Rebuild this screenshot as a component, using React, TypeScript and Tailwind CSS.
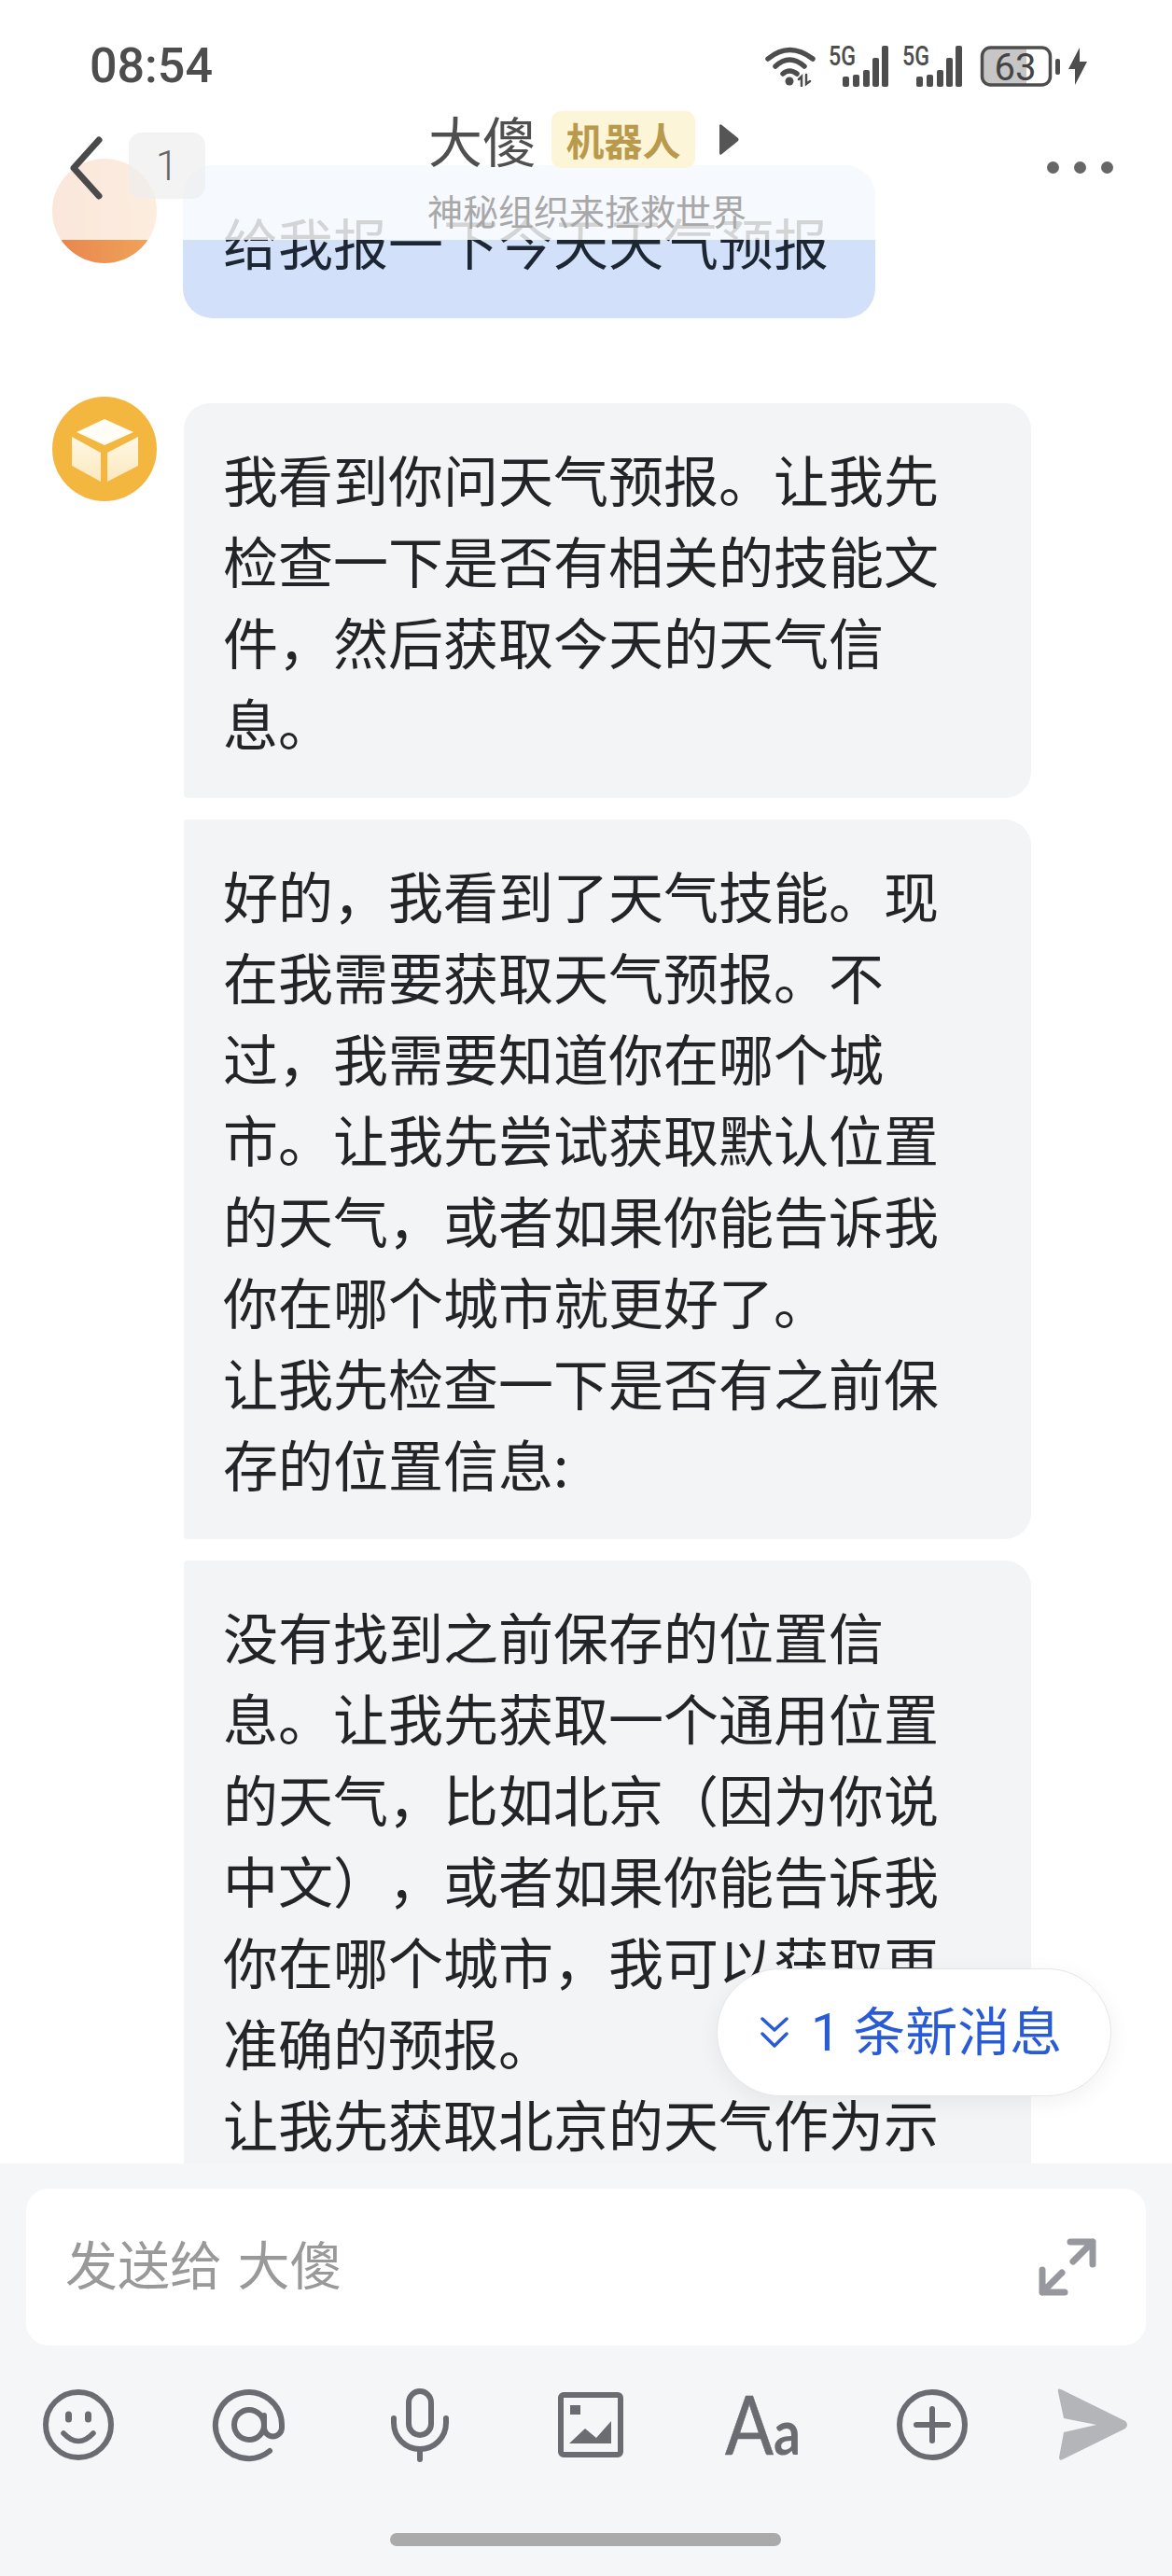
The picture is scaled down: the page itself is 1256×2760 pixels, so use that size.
const bubbles = [
  {
    corner: 'rounded-tl-[28px]',
    lines: ['我看到你问天气预报。让我先', '检查一下是否有相关的技能文', '件，然后获取今天的天气信', '息。'],
  },
  {
    corner: 'rounded-tl-[4px]',
    lines: [
      '好的，我看到了天气技能。现',
      '在我需要获取天气预报。不',
      '过，我需要知道你在哪个城',
      '市。让我先尝试获取默认位置',
      '的天气，或者如果你能告诉我',
      '你在哪个城市就更好了。',
      '让我先检查一下是否有之前保',
      '存的位置信息:',
    ],
  },
  {
    corner: 'rounded-tl-[4px]',
    lines: [
      '没有找到之前保存的位置信',
      '息。让我先获取一个通用位置',
      '的天气，比如北京（因为你说',
      '中文），或者如果你能告诉我',
      '你在哪个城市，我可以获取更',
      '准确的预报。',
      '让我先获取北京的天气作为示',
    ],
  },
];

const Wifi = () => (
  <svg width="54" height="44" viewBox="0 0 54 44" fill="none" stroke="#4d4d4d" strokeWidth="5.5" strokeLinecap="round">
    <path d="M3 14 Q26 -5 51 14" />
    <path d="M11 22 Q26 8 42 22" />
    <path d="M19 30 Q26 24 34 30" />
    <circle cx="26" cy="38" r="4.5" fill="#4d4d4d" stroke="none" />
    <path d="M39 43 V33 L36 36 M44 31 V41 L48 38" strokeWidth="2.5" />
  </svg>
);

const Signal = () => (
  <svg width="64" height="44" viewBox="0 0 64 44" fill="#4d4d4d">
    <text x="0" y="21" fontFamily="Roboto" fontSize="29" fontWeight="500" textLength="29" lengthAdjust="spacingAndGlyphs">
      5G
    </text>
    <rect x="15" y="33" width="7" height="11" rx="2" />
    <rect x="26" y="31" width="7" height="13" rx="2" />
    <rect x="37" y="26" width="7" height="18" rx="2" />
    <rect x="47" y="13" width="7" height="31" rx="2" />
    <rect x="57" y="0" width="7" height="44" rx="2" />
  </svg>
);

const Battery = () => (
  <svg width="86" height="44" viewBox="0 0 86 44">
    <path d="M10 3 H50 V41 H10 Q3 41 3 34 V10 Q3 3 10 3 Z" fill="#c6c6c6" />
    <rect x="2.5" y="2" width="73" height="40" rx="9" fill="none" stroke="#4d4d4d" strokeWidth="3.5" />
    <rect x="81" y="14" width="5" height="17" rx="2" fill="#4d4d4d" />
    <text x="38" y="37" textAnchor="middle" fontFamily="Roboto" fontSize="40" fill="#444444">
      63
    </text>
  </svg>
);

const Bolt = () => (
  <svg width="20" height="40" viewBox="0 0 20 40" fill="#4d4d4d">
    <path d="M12 0 L0 23 H7 L7 40 L20 15 H12 Z" />
  </svg>
);

const CubeAvatar = () => (
  <svg className="shrink-0" width="112" height="112" viewBox="0 0 112 112">
    <defs>
      <linearGradient id="cube-face" x1="0" y1="0" x2="0" y2="1">
        <stop offset="0" stopColor="#fff8e6" />
        <stop offset="1" stopColor="#fbe8bd" />
      </linearGradient>
    </defs>
    <circle cx="56" cy="56" r="56" fill="#f3b73f" />
    <path d="M56 24 L87 38 L56 52 L26 38 Z" fill="#fffdf6" />
    <path d="M21 43 L52 60 V91 L21 74 Z" fill="url(#cube-face)" />
    <path d="M59 60 L92 43 V74 L59 91 Z" fill="url(#cube-face)" />
  </svg>
);

const App = () => {
  return (
    <div className="relative flex h-[2760px] w-[1256px] flex-col overflow-hidden bg-white font-['Noto_Sans_CJK_SC',sans-serif] text-[#222428] [text-spacing-trim:space-all]">
      <main className="relative min-h-0 flex-1 overflow-hidden pl-[56px] pt-[170px]">
        <div className="flex items-start gap-[28px]">
          <div className="h-[112px] w-[112px] shrink-0 rounded-full bg-gradient-to-r from-[#e8844c] to-[#f0a55c]" />
          <div className="mt-[7px] w-[742px] whitespace-nowrap rounded-[32px] bg-[#d2e0fa] py-[38px] pl-[43px] text-[59px] leading-[88px] text-[#1d2733]">
            给我报一下今天天气预报
          </div>
        </div>

        <div className="mt-[84px] flex items-start gap-[29px]">
          <CubeAvatar />
          <div className="mt-[7px] flex w-[908px] flex-col gap-[23px]">
            {bubbles.map((bubble) => (
              <div
                key={bubble.lines[0]}
                className={`${bubble.corner} rounded-r-[28px] rounded-bl-[4px] bg-[#f3f4f6] pb-[38px] pl-[42px] pt-[37px] text-[59px] leading-[87px]`}
              >
                {bubble.lines.map((line) => (
                  <div key={line} className="whitespace-nowrap">
                    {line}
                  </div>
                ))}
              </div>
            ))}
          </div>
        </div>

        <div className="absolute left-[768px] top-[2109px] flex h-[137px] w-[423px] items-center rounded-full border border-[#e6e6e8] bg-white pl-[46px] text-[56px] text-[#2a5bd7] shadow-[0_6px_24px_rgba(0,0,0,0.06)]">
          <svg width="30" height="33" viewBox="0 0 30 33" fill="none" stroke="#2a5bd7" strokeWidth="3.5" strokeLinecap="round" strokeLinejoin="round">
            <path d="M2 2 L15 14 L28 2" />
            <path d="M2 18 L15 31 L28 18" />
          </svg>
          <span className="ml-[24px] whitespace-nowrap font-['Roboto','Noto_Sans_CJK_SC',sans-serif] leading-none">1 条新消息</span>
        </div>
      </main>

      <header className="absolute inset-x-0 top-0 h-[257px] bg-white/80 pt-[49px]">
        <div className="flex h-[44px] items-center justify-between pl-[96px] pr-[91px]">
          <span className="font-['Roboto',sans-serif] text-[52px] font-medium leading-none text-[#4d4d4d]">08:54</span>
          <div className="flex items-center">
            <Wifi />
            <div className="ml-[14px]">
              <Signal />
            </div>
            <div className="ml-[15px]">
              <Signal />
            </div>
            <div className="ml-[19px]">
              <Battery />
            </div>
            <div className="ml-[9px]">
              <Bolt />
            </div>
          </div>
        </div>

        <div className="mt-[26px] grid grid-cols-[1fr_auto_1fr]">
          <div className="mt-[23px] flex items-start gap-[28px] pl-[75px]">
            <svg className="mt-[4px]" width="35" height="68" viewBox="0 0 35 68" fill="none" stroke="#4a4a4a" strokeWidth="7" strokeLinecap="round" strokeLinejoin="round">
              <path d="M31 4 L4 34 L31 64" />
            </svg>
            <div className="flex h-[71px] w-[82px] items-center justify-center rounded-[14px] bg-[#eeeeee]/70 font-['Roboto',sans-serif] text-[44px] font-light text-[#666666]">
              1
            </div>
          </div>

          <div className="flex flex-col items-center">
            <div className="flex items-center pr-[5px]">
              <span className="text-[58px] leading-[61px] text-[#4f4f4f]">大傻</span>
              <span className="ml-[16px] flex h-[61px] w-[154px] items-center justify-center rounded-[10px] bg-[#fdf5d8] text-[41px] font-bold text-[#b99a4c]">
                机器人
              </span>
              <svg className="ml-[26px]" width="21" height="33" viewBox="0 0 21 33" fill="#555555">
                <path d="M2 0.5 L20 15 Q21 16.5 20 18 L2 32.5 Q0 33.5 0 31 V2 Q0 -0.5 2 0.5 Z" />
              </svg>
            </div>
            <span className="mt-[22px] pl-[2px] text-[38px] leading-[46px] text-[#a8a8a8]">神秘组织来拯救世界</span>
          </div>

          <div className="mt-[54px] flex justify-end gap-[16px] pr-[63px]">
            <span className="h-[13px] w-[13px] rounded-full bg-[#666666]" />
            <span className="h-[13px] w-[13px] rounded-full bg-[#666666]" />
            <span className="h-[13px] w-[13px] rounded-full bg-[#666666]" />
          </div>
        </div>
      </header>

      <footer className="h-[442px] shrink-0 bg-[#f5f6f8] pt-[27px]">
        <div className="mx-[28px] flex h-[168px] items-center justify-between rounded-[24px] bg-white pl-[42px] pr-[52px]">
          <span className="pb-[10px] text-[56px] text-[#999999] [word-spacing:4px]">发送给 大傻</span>
          <svg width="64" height="64" viewBox="0 0 64 64" fill="none" stroke="#97989e" strokeWidth="7" strokeLinecap="round" strokeLinejoin="round">
            <path d="M35 5 H59 V29 M59 5 L38 26" />
            <path d="M29 59 H5 V35 M5 59 L26 38" />
          </svg>
        </div>

        <div className="mt-[45px] flex gap-[103px] pl-[44px]">
          <svg width="80" height="80" viewBox="0 0 80 80" fill="none" stroke="#6b6c72" strokeWidth="6" strokeLinecap="round">
            <circle cx="40" cy="40" r="35" />
            <path d="M29.5 29 V34 M50.5 29 V34" strokeWidth="7" />
            <path d="M24 49 Q40 66 56 49" strokeWidth="5.5" />
          </svg>
          <svg width="80" height="80" viewBox="0 0 80 80" fill="none" stroke="#6b6c72" strokeWidth="6" strokeLinecap="round">
            <circle cx="40" cy="40" r="16" />
            <path d="M62 68 A35.5 35.5 0 1 1 75 40 V43 A9.5 9.5 0 0 1 56 43 V30" />
          </svg>
          <svg width="80" height="80" viewBox="0 0 80 80" fill="none" stroke="#6b6c72" strokeWidth="6" strokeLinecap="round">
            <rect x="28" y="4" width="24" height="47" rx="12" />
            <path d="M12 33 V38 A28 28 0 0 0 68 38 V33" />
            <path d="M40 66 V77" />
          </svg>
          <svg width="80" height="80" viewBox="0 0 80 80" fill="none" stroke="#6b6c72" strokeWidth="6">
            <rect x="8" y="8" width="64" height="64" rx="3" />
            <rect x="18" y="19" width="11" height="10" fill="#6b6c72" stroke="none" />
            <path d="M17 60 L34 44 L46 54 L62 36 V60 Z" fill="#6b6c72" stroke="none" />
          </svg>
          <svg width="80" height="80" viewBox="0 0 80 80" fill="#6b6c72">
            <text x="1" y="72" fontFamily="Lato" fontSize="88" stroke="#6b6c72" strokeWidth="0.6" textLength="52" lengthAdjust="spacingAndGlyphs">
              A
            </text>
            <text x="53" y="72" fontFamily="Lato" fontSize="66" fontWeight="700" textLength="29" lengthAdjust="spacingAndGlyphs">
              a
            </text>
          </svg>
          <svg width="80" height="80" viewBox="0 0 80 80" fill="none" stroke="#6b6c72" strokeWidth="6" strokeLinecap="round">
            <circle cx="40" cy="40" r="35" />
            <path d="M23 40 H57 M40 23 V57" />
          </svg>
          <svg className="-ml-[11px]" width="80" height="80" viewBox="0 0 80 80" fill="#b4b5b9">
            <path d="M6 2 L75 36 Q79 40 75 44 L8 77 Q4 79 4 75 L9 48 L44 40 L9 33 L3 5 Q2 0 6 2 Z" />
          </svg>
        </div>

        <div className="ml-[418px] mt-[76px] h-[14px] w-[419px] rounded-full bg-[#aaaaaa]" />
      </footer>
    </div>
  );
};

export default App;
